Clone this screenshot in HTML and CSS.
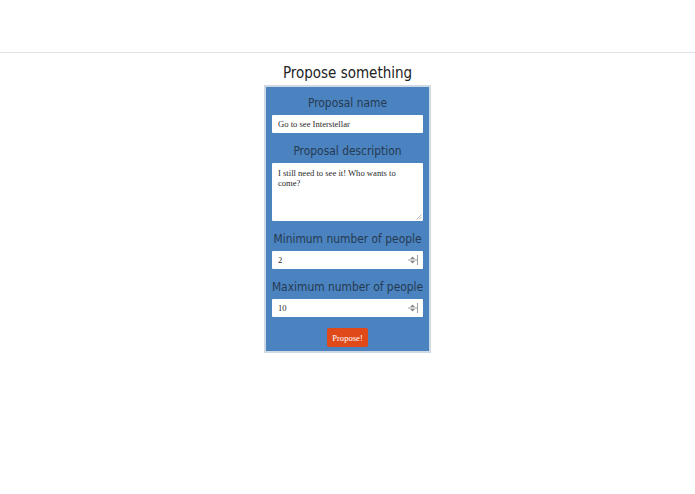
FILE: index.html
```html
<!DOCTYPE html>
<html>
<head>
<meta charset="utf-8">
<title>Propose something</title>
<link rel="stylesheet" href="styles.css">
</head>
<body>
<header class="topbar"></header>
<main class="page">
  <h1 class="title">Propose something</h1>
  <form class="panel">
    <div class="field">
      <label class="label" for="name">Proposal name</label>
      <div class="box"><input id="name" class="input" type="text" value="Go to see Interstellar"></div>
    </div>
    <div class="field">
      <label class="label" for="desc">Proposal description</label>
      <div class="box area"><textarea id="desc" class="textarea">I still need to see it! Who wants to come?</textarea>
        <svg class="grip" width="6" height="6" viewBox="0 0 6 6"><path d="M5.5 0.5 L0.5 5.5 M5.5 3 L3 5.5" stroke="#b5b5b5" stroke-width="1"/></svg>
      </div>
    </div>
    <div class="field">
      <label class="label" for="min">Minimum number of people</label>
      <div class="box"><input id="min" class="input" type="text" value="2">
        <svg class="spin" width="10" height="10" viewBox="0 0 10 10"><path d="M2 4 L4.5 1.5 L7 4 Z M2 6 L4.5 8.5 L7 6 Z" fill="#8c8c8c"/><path d="M0 5 H9.5 M9.5 0 V10" stroke="#a0a0a0" stroke-width="1"/></svg>
      </div>
    </div>
    <div class="field">
      <label class="label" for="max">Maximum number of people</label>
      <div class="box"><input id="max" class="input" type="text" value="10">
        <svg class="spin" width="10" height="10" viewBox="0 0 10 10"><path d="M2 4 L4.5 1.5 L7 4 Z M2 6 L4.5 8.5 L7 6 Z" fill="#8c8c8c"/><path d="M0 5 H9.5 M9.5 0 V10" stroke="#a0a0a0" stroke-width="1"/></svg>
      </div>
    </div>
    <div class="actions"><button type="button" class="button">Propose!</button></div>
  </form>
</main>
</body>
</html>
```
FILE: styles.css
```css
html, body {
  margin: 0;
  padding: 0;
  background: #ffffff;
}
body {
  font-family: "DejaVu Sans Condensed", "DejaVu Sans", sans-serif;
}
.topbar {
  height: 52px;
  border-bottom: 1px solid #dfe3e6;
}
.page {
  display: flex;
  flex-direction: column;
  align-items: center;
}
.title {
  margin: 9px 0 0;
  font-size: 15px;
  line-height: 22px;
  font-weight: normal;
  color: #222222;
}
.panel {
  box-sizing: border-box;
  width: 167px;
  margin-top: 1px;
  padding: 6px 5px 4px;
  background: #4a83bf;
  border: 2px solid #cfd9e4;
  display: flex;
  flex-direction: column;
  gap: 8px;
}
.field {
  display: flex;
  flex-direction: column;
  gap: 2px;
}
.label {
  text-align: center;
  white-space: nowrap;
  font-size: 11.9px;
  line-height: 20px;
  color: #263a52;
}
.box {
  position: relative;
  display: flex;
  align-items: center;
  height: 18px;
  margin: 0 1px;
  background: #ffffff;
  border-radius: 1px;
}
.box.area {
  height: 58px;
  align-items: stretch;
}
.input, .textarea {
  flex: 1;
  min-width: 0;
  border: none;
  outline: none;
  background: transparent;
  font-family: "Liberation Serif", "DejaVu Serif", serif;
  font-size: 8.6px;
  color: #2a2a2a;
  padding: 0 0 0 6px;
  margin: 0;
}
.textarea {
  resize: none;
  padding: 5px 26px 4px 6px;
  line-height: 10px;
}
.spin {
  position: absolute;
  right: 5px;
  top: 4px;
}
.grip {
  position: absolute;
  right: 1px;
  bottom: 1px;
}
.actions {
  display: flex;
  justify-content: center;
  padding-top: 3px;
}
.button {
  width: 41px;
  height: 19px;
  padding: 0;
  border: none;
  border-radius: 2px;
  background: #e04a1b;
  color: #ffffff;
  font-family: "Liberation Serif", "DejaVu Serif", serif;
  font-size: 8.6px;
}
```
